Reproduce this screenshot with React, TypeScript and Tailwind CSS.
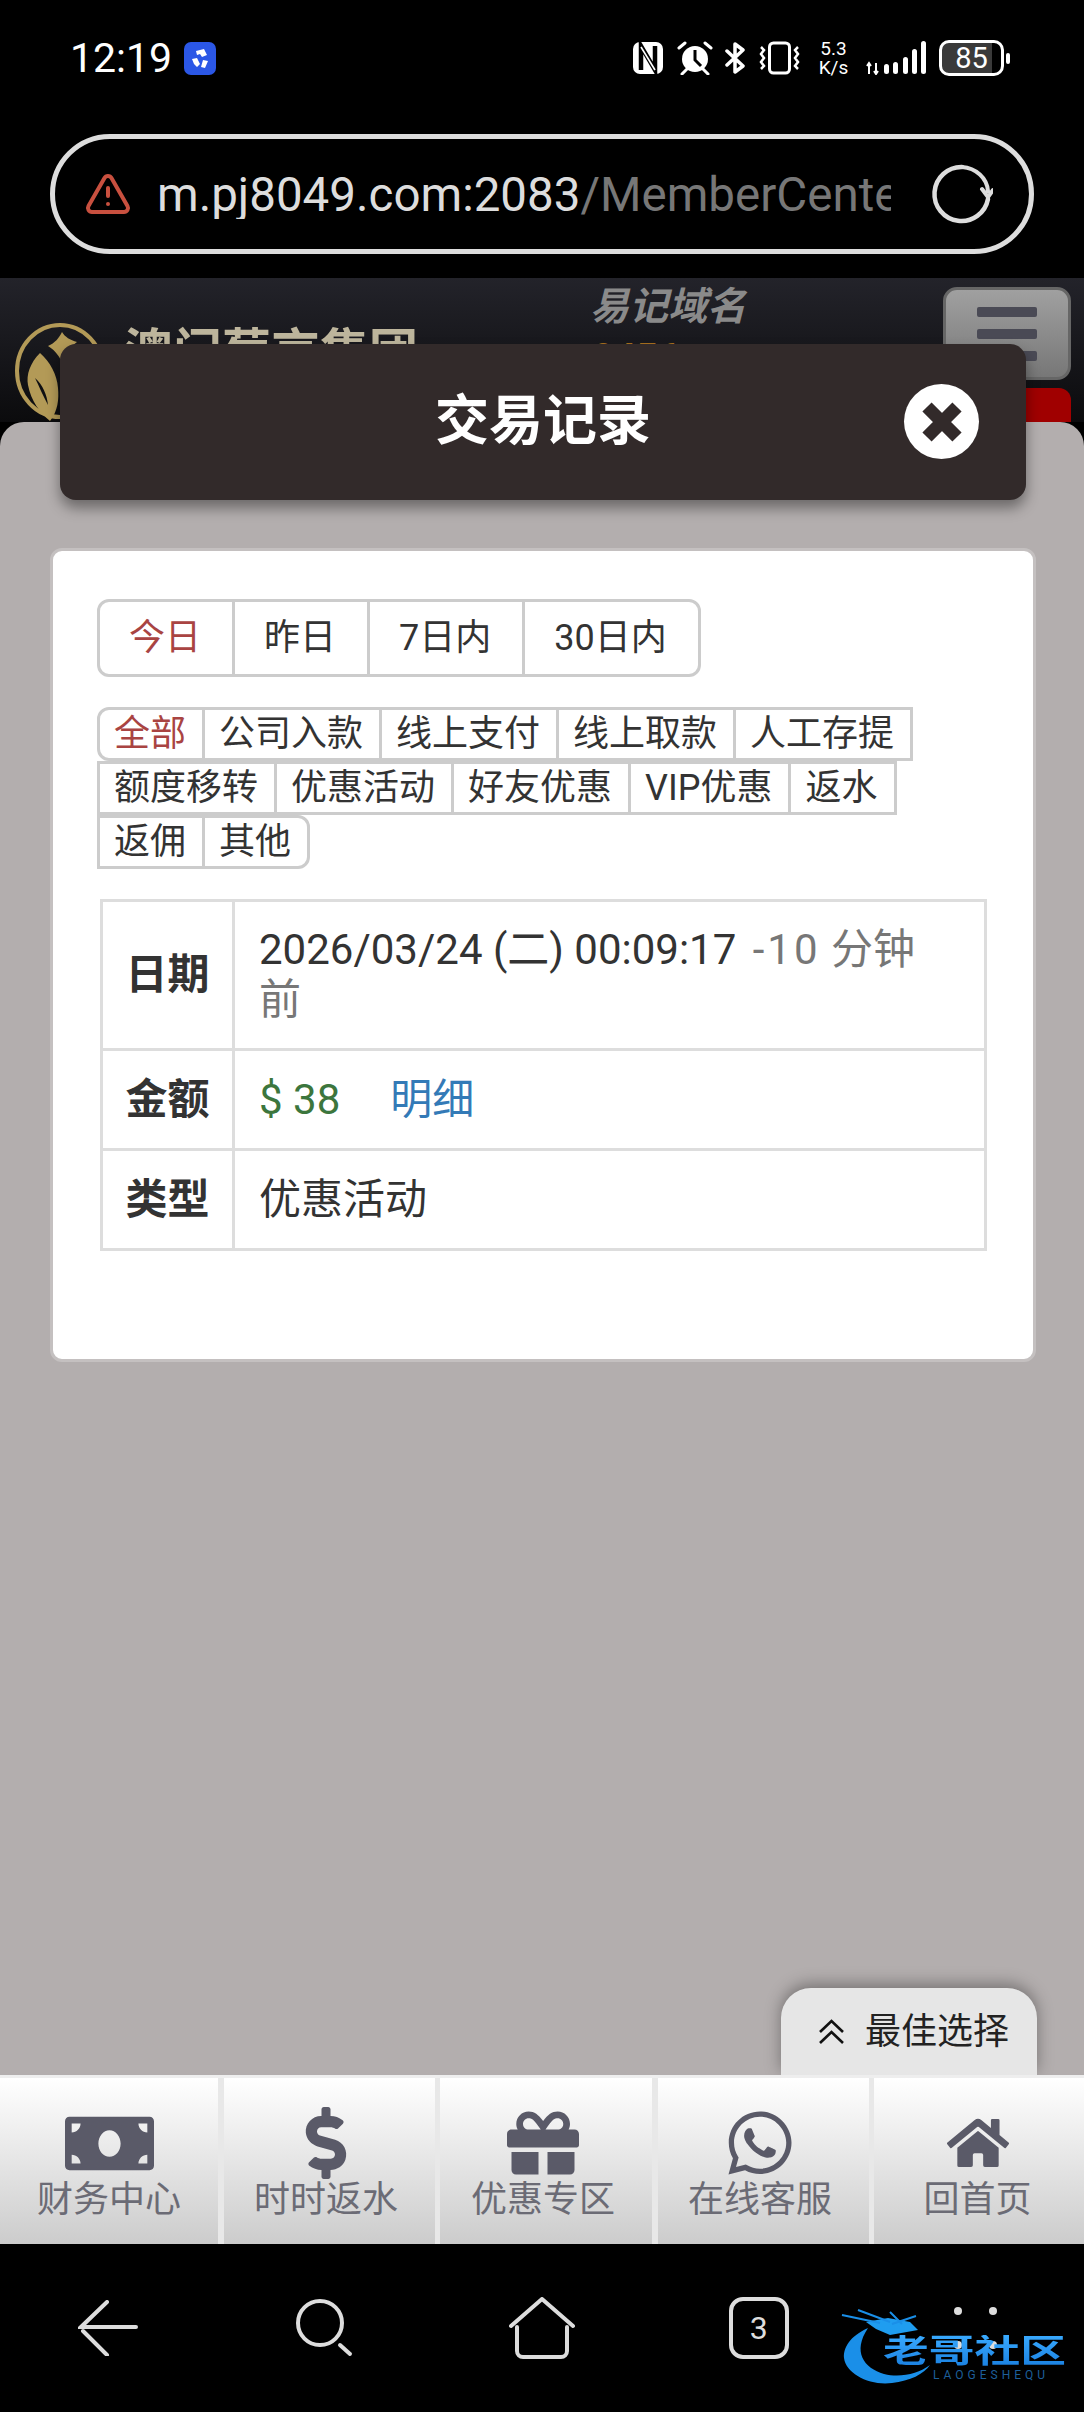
import React from 'react'
import { TriangleAlert } from 'lucide-react'
import { FaDollarSign, FaGift, FaHome, FaMoneyBill, FaWhatsapp } from 'react-icons/fa'

const dateTabs = ['今日', '昨日', '7日内', '30日内']
const typeTabs = ['全部', '公司入款', '线上支付', '线上取款', '人工存提', '额度移转', '优惠活动', '好友优惠', 'VIP优惠', '返水', '返佣', '其他']

const navItems = [
  { label: '财务中心', pad: '', icon: <FaMoneyBill size={89} /> },
  { label: '时时返水', pad: 'pr-[6px]', icon: <FaDollarSign size={72} /> },
  { label: '优惠专区', pad: 'pr-[6px]', icon: <FaGift size={72} /> },
  { label: '在线客服', pad: 'pr-[6px]', icon: <FaWhatsapp size={72} /> },
  { label: '回首页', pad: 'pr-[3px]', icon: <FaHome size={62} /> }
]

function StatusIcons() {
  return (
    <div className="ml-auto mr-[74px] flex items-center text-white">
      {/* NFC */}
      <svg width="30" height="32" viewBox="0 0 30 32">
        <rect width="30" height="32" rx="7" fill="#fff" />
        <path d="M8 28V4l14 24V4" fill="none" stroke="#000" strokeWidth="4.5" />
        <path d="M8 5l14 23" fill="none" stroke="#fff" strokeWidth="1.6" />
      </svg>
      {/* alarm */}
      <svg className="ml-[14px]" width="36" height="34" viewBox="0 0 36 34">
        <circle cx="18" cy="18" r="13" fill="#fff" />
        <path d="M18 9v10l6 6" fill="none" stroke="#000" strokeWidth="3" />
        <path d="M2 7l6-5M34 7l-6-5M5 33l5-5M31 33l-5-5" stroke="#fff" strokeWidth="3" strokeLinecap="round" />
      </svg>
      {/* bluetooth */}
      <svg className="ml-[11px]" width="22" height="32" viewBox="0 0 22 32">
        <path d="M3 9l16 15-8 6V2l8 6L3 23" fill="none" stroke="#fff" strokeWidth="3.5" strokeLinejoin="round" strokeLinecap="round" />
      </svg>
      {/* vibrate */}
      <svg className="ml-[12px]" width="43" height="34" viewBox="0 0 43 34">
        <rect x="11.5" y="2" width="20" height="30" rx="4" fill="none" stroke="#fff" strokeWidth="3" />
        <path d="M3 6l3 3-3 4 3 4-3 4 3 4-3 3M40 6l-3 3 3 4-3 4 3 4-3 4 3 3" fill="none" stroke="#fff" strokeWidth="2.5" />
      </svg>
      <div className="ml-[15px] flex w-[35px] flex-col items-center text-[19px] leading-[19px]">
        <span>5.3</span>
        <span>K/s</span>
      </div>
      {/* signal */}
      <svg className="ml-[15px]" width="60" height="34" viewBox="0 0 60 34">
        <path d="M3 22v11M10 33V22M1 25l2-3 2 3M8 30l2 3 2-3" stroke="#fff" strokeWidth="2" fill="none" />
        <rect x="18" y="23" width="5" height="10" rx="2.5" fill="#fff" />
        <rect x="27" y="21" width="5" height="12" rx="2.5" fill="#fff" />
        <rect x="37" y="16" width="5" height="17" rx="2.5" fill="#fff" />
        <rect x="46" y="8" width="5" height="25" rx="2.5" fill="#fff" />
        <rect x="55" y="0" width="5" height="33" rx="2.5" fill="#fff" />
      </svg>
      {/* battery */}
      <div className="ml-[13px] flex h-[36px] w-[65px] items-center justify-center rounded-[10px] border-[3px] border-white bg-[linear-gradient(90deg,#3a3a3a_85%,#000_85%)] text-[29px] leading-none">
        85
      </div>
      <div className="ml-[2px] h-[11px] w-[4px] rounded-full bg-white" />
    </div>
  )
}

export default function App() {
  return (
    <div className="flex h-[2412px] w-[1084px] flex-col overflow-hidden bg-black font-['Roboto','Noto_Sans_CJK_SC',sans-serif]">
      {/* Status bar + address bar */}
      <div className="h-[278px] shrink-0">
        <div className="flex h-[114px] items-center pl-[70px] pt-[2px]">
          <span className="text-[41px] leading-none text-white">12:19</span>
          <svg className="ml-[12px]" width="32" height="33" viewBox="0 0 32 33">
            <rect width="32" height="33" rx="7" fill="#2b57e6" />
            <path d="M12 9l8-2 3 6-5 2-2-3-3 1zM8 17l5-1 3 6-3 3-3-3zM19 18l5 1-3 7-4-1z" fill="#fff" />
          </svg>
          <StatusIcons />
        </div>
        <div className="mx-[50px] mt-[20px] flex h-[120px] items-center rounded-full border-[5px] border-[#ddd] pl-[29px]">
          <TriangleAlert size={48} strokeWidth={2} className="text-[#c8503f]" />
          <div className="ml-[25px] w-[734px] overflow-hidden whitespace-nowrap pt-[3px] text-[47.5px] leading-none text-[#ddd]">
            m.pj8049.com:2083<span className="text-[#777]">/MemberCenter</span>
          </div>
          <svg className="ml-[40px]" width="62" height="62" viewBox="0 0 62 62">
            <path d="M57 36A27 27 0 1 1 31 4" fill="none" stroke="#ddd" strokeWidth="4.5" strokeLinecap="round" />
            <path d="M31 4c14 1 25 11 26 24M51 26l6 8 5-7" fill="none" stroke="#ddd" strokeWidth="4" strokeLinecap="round" />
          </svg>
        </div>
      </div>

      {/* Page behind the popup */}
      <div className="relative flex h-[144px] shrink-0 overflow-hidden bg-[linear-gradient(180deg,#23232a,#0b0b0d)]">
        <svg className="ml-[15px] mt-[45px]" width="90" height="100" viewBox="0 0 90 100">
          <ellipse cx="45" cy="48" rx="43" ry="46" fill="none" stroke="#b39a57" strokeWidth="4" />
          <path d="M33 23C40 20 44 15 47 9c3 5 8 8 15 10-8 6-13 14-14 24-2-8-7-15-15-20z" fill="#b39a57" />
          <path d="M25 30C15 40 11 52 13 62c3 16 12 28 22 36 8-10 9-22 8-33-1-14-8-26-18-35z" fill="#b39a57" />
          <path d="M20 55c4 8 8 18 13 27-1-10-5-20-13-27z" fill="#0f0f12" />
        </svg>
        <span className="ml-[19px] mt-[50px] text-[49px] font-bold leading-none whitespace-nowrap text-[#bdb59c]">澳门葡京集团</span>
        <div className="absolute left-[590px] top-[10px] flex flex-col">
          <span className="text-[39px] font-bold italic leading-none text-[#8a8a8a]">易记域名</span>
          <span className="mt-[12px] text-[39px] font-bold italic leading-none text-[#a8701f]">8456</span>
        </div>
        <div className="absolute right-[13px] top-[9px] flex h-[93px] w-[128px] flex-col items-center justify-center gap-[12px] rounded-[14px] border-[3px] border-[#666] bg-[linear-gradient(180deg,#a0a0a0,#777)]">
          <span className="h-[10px] w-[60px] rounded-[2px] bg-[#4a4a55]" />
          <span className="h-[10px] w-[60px] rounded-[2px] bg-[#4a4a55]" />
          <span className="h-[10px] w-[60px] rounded-[2px] bg-[#4a4a55]" />
        </div>
        <div className="absolute right-[13px] top-[110px] h-[60px] w-[100px] rounded-[12px] bg-[#a00000]" />
      </div>

      {/* Popup panel */}
      <div className="relative z-10 flex-1 rounded-t-[24px] bg-[#b3aeae] pl-[50px] pr-[48px]">
        <div className="relative mx-[10px] -mt-[78px] flex h-[156px] items-center justify-center rounded-[16px] bg-[#322a2a] shadow-[0_8px_14px_rgba(0,0,0,0.4)]">
          <span className="text-[54px] font-bold leading-none text-white">交易记录</span>
          <span className="absolute right-[47px] top-[40px] flex h-[75px] w-[75px] items-center justify-center rounded-full bg-white">
            <svg width="42" height="42" viewBox="0 0 42 42">
              <path d="M6 6l30 30M36 6L6 36" fill="none" stroke="#322a2a" strokeWidth="13" />
            </svg>
          </span>
        </div>

        <div className="mt-[48px] h-[814px] rounded-[12px] border-[3px] border-[#c4c0c0] bg-white pl-[44px] pr-[44px] pt-[48px] text-[#333]">
          <div className="flex pl-[3px]">
            {dateTabs.map((t, i) => (
              <button
                key={t}
                className={`-ml-[3px] h-[78px] border-[3px] border-[#ccc] pl-[29px] pr-[31px] text-[36px] leading-none ${i === 0 ? 'rounded-l-[12px] text-[#a94442]' : ''} ${i === dateTabs.length - 1 ? 'rounded-r-[12px]' : ''}`}
              >
                {t}
              </button>
            ))}
          </div>

          <div className="mt-[30px] flex flex-wrap pl-[3px]">
            {typeTabs.map((t, i) => (
              <button
                key={t}
                className={`-ml-[3px] h-[54px] border-[3px] border-[#ccc] pl-[14px] pr-[16px] text-[36px] leading-none ${i === 0 ? 'rounded-l-[12px] text-[#a94442]' : ''} ${i === typeTabs.length - 1 ? 'rounded-r-[12px]' : ''}`}
              >
                {t}
              </button>
            ))}
          </div>

          <table className="ml-[3px] mt-[30px] w-[887px] border-collapse text-[42px] leading-[50px]">
            <tbody>
              <tr>
                <th className="w-[132px] border-[3px] border-[#ddd] py-[23px] whitespace-nowrap">日期</th>
                <td className="border-[3px] border-[#ddd] py-[23px] pl-[24px] pr-[50px]">
                  2026/03/24 (二) 00:09:17{' '}
                  <span className="ml-[6px] text-[#777]">
                    <span className="tracking-[3px]">-10</span> 分钟前
                  </span>
                </td>
              </tr>
              <tr>
                <th className="border-[3px] border-[#ddd] py-[23.5px] whitespace-nowrap">金额</th>
                <td className="border-[3px] border-[#ddd] px-[24px] py-[23.5px]">
                  <span className="text-[#3c763d]">$ 38</span>
                  <a className="ml-[50px] text-[#337ab7]">明细</a>
                </td>
              </tr>
              <tr>
                <th className="border-[3px] border-[#ddd] py-[23.5px] whitespace-nowrap">类型</th>
                <td className="border-[3px] border-[#ddd] px-[24px] py-[23.5px]">优惠活动</td>
              </tr>
            </tbody>
          </table>
        </div>

        <div className="absolute bottom-0 right-[47px] flex h-[87px] w-[256px] items-center rounded-t-[30px] bg-[#e6e6e6] pl-[36px] shadow-[0_-4px_16px_rgba(0,0,0,0.35)]">
          <svg width="29" height="25" viewBox="0 0 29 25">
            <path d="M3 13L14.5 2 26 13M3 24L14.5 13 26 24" fill="none" stroke="#111" strokeWidth="2.6" />
          </svg>
          <span className="ml-[19px] text-[36px] leading-none text-[#222]">最佳选择</span>
        </div>
      </div>

      {/* Bottom nav */}
      <div className="relative z-20 grid h-[169px] shrink-0 grid-cols-[218px_211px_212px_211px_1fr] gap-x-[5.5px] border-t-[3px] border-[#eee] bg-[#e8e8e8]">
        {navItems.map(item => (
          <div key={item.label} className={`flex flex-col items-center bg-[linear-gradient(180deg,#fff,#ccc)] pt-[29px] text-[#5a5a68] ${item.pad}`}>
            <div className="flex h-[72px] items-center justify-center overflow-visible">{item.icon}</div>
            <span className="text-[36px] leading-[42px] text-[#6b6b75]">{item.label}</span>
          </div>
        ))}
      </div>

      {/* System nav */}
      <div className="relative z-20 grid h-[168px] shrink-0 grid-cols-5 items-center justify-items-center bg-black">
        <svg width="60" height="56" viewBox="0 0 60 56">
          <path d="M29 2L3 27h55M5 31l24 24" fill="none" stroke="#ddd" strokeWidth="4" strokeLinecap="round" />
        </svg>
        <svg width="58" height="58" viewBox="0 0 58 58">
          <circle cx="24" cy="24" r="22" fill="none" stroke="#ddd" strokeWidth="4" />
          <path d="M44 46l10 9" stroke="#ddd" strokeWidth="4" strokeLinecap="round" />
        </svg>
        <svg width="66" height="62" viewBox="0 0 66 62">
          <path d="M2 29L33 2l31 27M8 30v24a6 6 0 0 0 6 6h38a6 6 0 0 0 6-6V30" fill="none" stroke="#ddd" strokeWidth="4" strokeLinecap="round" strokeLinejoin="round" />
        </svg>
        <div className="flex h-[62px] w-[60px] items-center justify-center rounded-[14px] border-[4px] border-[#ddd] text-[32px] leading-none text-[#ddd]">3</div>
        <div className="grid grid-cols-2 gap-x-[27px] gap-y-[26px]">
          {[0, 1, 2, 3].map(n => (
            <span key={n} className="h-[8px] w-[8px] rounded-full bg-[#ddd]" />
          ))}
        </div>

        {/* watermark */}
        <div className="absolute left-[840px] top-[58px] h-[86px] w-[240px]">
          <svg className="absolute left-0 top-0" width="92" height="86" viewBox="0 0 92 86">
            <path d="M28 26C10 34 3 46 4 56c2 16 26 28 48 25 18-2 32-9 38-18-12 9-30 13-46 9C24 66 12 50 28 26z" fill="#1a8fe8" />
            <path d="M26 20l22-4 22 4 8 8-28 5-14-6z" fill="#1f9df0" />
            <path d="M2 13l38 8M18 8l32 12M76 14L52 22M50 10l12 12" stroke="#1a8fe8" strokeWidth="2" />
          </svg>
          <span className="absolute left-[43px] top-[33px] origin-left scale-x-[1.43] text-[32px] font-bold leading-none whitespace-nowrap bg-[linear-gradient(180deg,#39aaff,#1a80e0)] bg-clip-text text-transparent">老哥社区</span>
          <span className="absolute left-[93px] top-[67px] text-[12px] leading-none tracking-[4px] text-[#1d5f9a]">LAOGESHEQU</span>
        </div>
      </div>
    </div>
  )
}
